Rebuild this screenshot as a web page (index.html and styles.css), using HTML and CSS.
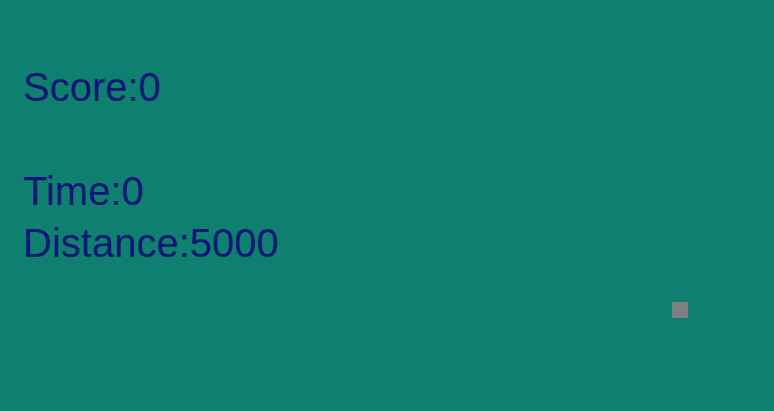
FILE: index.html
```html
<!DOCTYPE html>
<html>
<head>
<meta charset="utf-8">
<link rel="stylesheet" href="styles.css">
</head>
<body>
<div class="game">
  <div class="hud">
    <div class="line">Score:0</div>
    <div class="line blank"></div>
    <div class="line">Time:0</div>
    <div class="line">Distance:5000</div>
  </div>
  <div class="player"></div>
</div>
</body>
</html>
```
FILE: styles.css
```css
html, body {
  margin: 0;
  padding: 0;
  background: #0f806f;
}
.game {
  position: relative;
  width: 774px;
  height: 411px;
  overflow: hidden;
  background: #0f806f;
}
.hud {
  padding: 61px 0 0 23px;
  font-family: "Liberation Sans", Arial, sans-serif;
  font-size: 40px;
  line-height: 52px;
  color: #0b1677;
}
.line {
  height: 52px;
  white-space: nowrap;
}
.player {
  position: absolute;
  left: 672px;
  top: 302px;
  width: 16px;
  height: 16px;
  background: #808080;
}
```
